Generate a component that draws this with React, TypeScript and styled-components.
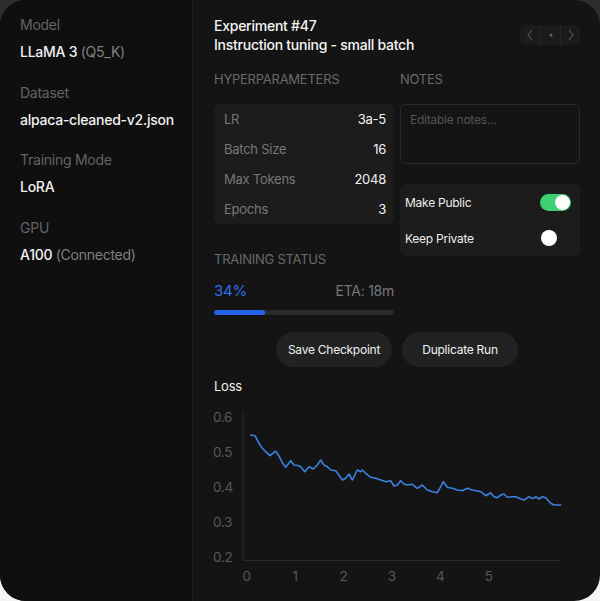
import React from "react";
import styled, { createGlobalStyle } from "styled-components";

const Global = createGlobalStyle`
  html, body { margin: 0; padding: 0; }
  body {
    width: 600px; height: 601px; overflow: hidden;
    background: linear-gradient(to bottom, #2e2e2e 0%, #2e2e2e 50%, #f4f4f4 50%, #f4f4f4 100%);
    font-family: Inter, "Noto Sans", sans-serif;
    letter-spacing: -0.25px;
    -webkit-font-smoothing: antialiased;
  }
  * { box-sizing: border-box; }
`;

const Shell = styled.div`
  width: 600px; height: 601px;
  border-radius: 26px;
  overflow: hidden;
  display: flex;
  background: #141414;
`;

const Sidebar = styled.aside`
  width: 193px; flex: none;
  background: #0f0f0f;
  border-right: 1px solid #1d1d1d;
  padding: 16px 20px;
  display: flex; flex-direction: column; gap: 22.5px;
`;

const Field = styled.div`
  display: flex; flex-direction: column; gap: 9px;
`;

const FieldLabel = styled.div`
  font-size: 14px; line-height: 18px; color: #636363;
`;

const FieldValue = styled.div`
  font-size: 14px; line-height: 18px; color: #f2f2f2; font-weight: 450;
  white-space: nowrap; letter-spacing: -0.25px;
`;

const Muted = styled.span`
  color: #808080; font-weight: 400;
`;

const Main = styled.main`
  flex: 1;
  padding: 16px 20px 0 21px;
  display: flex; flex-direction: column;
`;

const Header = styled.div`
  display: flex; justify-content: space-between; align-items: flex-start;
`;

const Title = styled.div`
  font-size: 14px; line-height: 19px; font-weight: 500; color: #f5f5f5;
`;

const Nav = styled.div`
  margin-top: 9px;
  display: flex; height: 20px;
  background: #1b1b1b; border-radius: 5px;
`;

const NavCell = styled.div<{ $divider?: boolean }>`
  width: 20px; height: 20px;
  display: flex; align-items: center; justify-content: center;
  border-left: ${(p) => (p.$divider ? "1px solid #242424" : "none")};
  color: #555;
`;

const Columns = styled.div`
  margin-top: 17px;
  display: grid; grid-template-columns: 180px 180px; column-gap: 6px;
`;

const Col = styled.div`
  display: flex; flex-direction: column;
`;

const SectionTitle = styled.div<{ $mt?: number }>`
  font-size: 13px; line-height: 16px; color: #6a6a6a;
  text-transform: uppercase;
  margin-top: ${(p) => p.$mt ?? 0}px;
  margin-bottom: 17px;
`;

const Card = styled.div`
  background: #1c1c1c; border-radius: 6px;
`;

const ParamRow = styled.div`
  height: 30px; padding: 0 8px 0 10px;
  display: flex; align-items: center; justify-content: space-between;
  font-size: 13px;
`;

const ParamLabel = styled.span`
  color: #777;
`;

const ParamValue = styled.span`
  color: #f2f2f2;
`;

const Notes = styled.div`
  height: 60px;
  border: 1px solid #2a2a2a; border-radius: 6px;
  padding: 7px 9px;
  font-size: 12px; line-height: 16px; color: #555;
`;

const ToggleCard = styled(Card)`
  margin-top: 20px;
`;

const ToggleRow = styled.div`
  height: 36px; padding: 0 5px;
  display: flex; align-items: center; justify-content: space-between;
  font-size: 12px; color: #eee;
`;

const Track = styled.div<{ $on: boolean }>`
  width: 31px; height: 17px; border-radius: 9px;
  background: ${(p) => (p.$on ? "#3fcf70" : "transparent")};
  display: flex; align-items: center;
  justify-content: ${(p) => (p.$on ? "flex-end" : "flex-start")};
  padding: 0 1px; margin-right: 4px;
`;

const Knob = styled.div<{ $on: boolean }>`
  width: ${(p) => (p.$on ? 15 : 16)}px; height: ${(p) => (p.$on ? 15 : 16)}px;
  border-radius: 50%; background: #fff;
`;

const StatusRow = styled.div`
  margin-top: -4px;
  display: flex; justify-content: space-between; align-items: center;
  height: 20px;
`;

const Percent = styled.span`
  font-size: 15px; color: #2f6fe8;
`;

const Eta = styled.span`
  font-size: 14px; color: #777;
`;

const Bar = styled.div`
  margin-top: 10px; height: 5px; border-radius: 3px; background: #2a2a2a; overflow: hidden;
`;

const Fill = styled.div`
  height: 100%; background: #2563eb; border-radius: 3px;
`;

const Actions = styled.div`
  margin-top: 17px;
  display: flex; justify-content: center; gap: 10px;
`;

const Button = styled.button`
  width: 116px; height: 35px; border-radius: 18px;
  border: none; background: #222; color: #f0f0f0;
  font-family: Inter, "Noto Sans", sans-serif; font-size: 12px; letter-spacing: -0.25px;
`;

const ChartTitle = styled.div`
  margin-top: 11px;
  font-size: 13px; line-height: 16px; color: #f2f2f2;
`;

const ChartSvg = styled.svg`
  display: block; margin-top: 6px; margin-left: -1px;
`;

const Chevron = ({ dir }: { dir: "l" | "r" }) => (
  <svg width="8" height="12" viewBox="0 0 8 12">
    <path
      d={dir === "l" ? "M6 1 L2 6 L6 11" : "M2 1 L6 6 L2 11"}
      fill="none" stroke="#555" strokeWidth="1.2"
    />
  </svg>
);

// points traced in a 3x zoom of region origin (195,370)
const raw: [number, number][] = [
  [170,195],[183,197],[195,220],[205,235],[215,245],[228,257],[240,247],[245,244],[255,258],[265,278],
  [275,292],[290,272],[300,285],[315,287],[320,290],[332,305],[345,290],[358,297],[370,285],[380,270],
  [390,285],[400,290],[410,300],[425,302],[435,315],[445,330],[455,325],[465,312],[475,330],[490,300],
  [500,305],[505,300],[515,310],[530,322],[545,325],[560,330],[575,335],[590,332],[600,348],[610,345],
  [620,332],[630,342],[640,345],[655,343],[670,355],[685,345],[700,360],[715,365],[730,368],[740,350],
  [748,335],[760,352],[775,355],[790,360],[805,362],[820,355],[835,360],[850,363],[860,365],[875,377],
  [890,368],[900,380],[910,383],[920,375],[930,372],[940,382],[955,380],[965,380],[975,385],[990,390],
  [1005,380],[1012,385],[1020,385],[1025,380],[1035,387],[1045,380],[1055,383],[1070,400],[1080,405],[1100,405],
];
// chart svg origin at page (214,400)
const pts = raw.map(([x, y]) => [x / 3 - 19, y / 3 - 30]);
const lossPath = pts.map((p, i) => `${i ? "L" : "M"}${p[0].toFixed(1)} ${p[1].toFixed(1)}`).join(" ");

const yTicks = ["0.6", "0.5", "0.4", "0.3", "0.2"];
const xTicks = ["0", "1", "2", "3", "4", "5"];

const LossChart = () => (
  <ChartSvg width="366" height="190" viewBox="0 0 366 190">
    <line x1="30" y1="13" x2="30" y2="160.5" stroke="#2a2a2a" strokeWidth="1" />
    <line x1="30" y1="160.5" x2="347" y2="160.5" stroke="#2a2a2a" strokeWidth="1" />
    {yTicks.map((t, i) => (
      <text key={t} x="0" y={16.7 + i * 35 + 5} textAnchor="start" fontSize="13.5" letterSpacing="-0.3" fill="#585858" fontFamily="Inter, sans-serif">
        {t}
      </text>
    ))}
    {xTicks.map((t, i) => (
      <text key={t} x={33.7 + i * 48.4} y="180.7" textAnchor="middle" fontSize="13.5" fill="#585858" fontFamily="Inter, sans-serif">
        {t}
      </text>
    ))}
    <path d={lossPath} fill="none" stroke="#3b82e0" strokeWidth="1.6" strokeLinejoin="round" strokeLinecap="round" />
  </ChartSvg>
);

const params = [
  ["LR", "3a-5"],
  ["Batch Size", "16"],
  ["Max Tokens", "2048"],
  ["Epochs", "3"],
];

export default function App() {
  const progress = 34;
  return (
    <>
      <Global />
      <Shell>
        <Sidebar>
          <Field>
            <FieldLabel>Model</FieldLabel>
            <FieldValue>LLaMA 3 <Muted>(Q5_K)</Muted></FieldValue>
          </Field>
          <Field>
            <FieldLabel>Dataset</FieldLabel>
            <FieldValue>alpaca-cleaned-v2.json</FieldValue>
          </Field>
          <Field>
            <FieldLabel>Training Mode</FieldLabel>
            <FieldValue>LoRA</FieldValue>
          </Field>
          <Field>
            <FieldLabel>GPU</FieldLabel>
            <FieldValue>A100 <Muted>(Connected)</Muted></FieldValue>
          </Field>
        </Sidebar>
        <Main>
          <Header>
            <Title>
              Experiment #47
              <br />
              Instruction tuning - small batch
            </Title>
            <Nav>
              <NavCell><Chevron dir="l" /></NavCell>
              <NavCell $divider>
                <svg width="4" height="4" viewBox="0 0 4 4"><circle cx="2" cy="2" r="1.5" fill="#666" /></svg>
              </NavCell>
              <NavCell $divider><Chevron dir="r" /></NavCell>
            </Nav>
          </Header>
          <Columns>
            <Col>
              <SectionTitle>Hyperparameters</SectionTitle>
              <Card>
                {params.map(([k, v]) => (
                  <ParamRow key={k}>
                    <ParamLabel>{k}</ParamLabel>
                    <ParamValue>{v}</ParamValue>
                  </ParamRow>
                ))}
              </Card>
              <SectionTitle $mt={27}>Training Status</SectionTitle>
              <StatusRow>
                <Percent>{progress}%</Percent>
                <Eta>ETA: 18m</Eta>
              </StatusRow>
              <Bar>
                <Fill style={{ width: `${(progress / 100) * 100 * 0.83}%` }} />
              </Bar>
            </Col>
            <Col>
              <SectionTitle>Notes</SectionTitle>
              <Notes>Editable notes...</Notes>
              <ToggleCard>
                <ToggleRow>
                  Make Public
                  <Track $on><Knob $on /></Track>
                </ToggleRow>
                <ToggleRow>
                  Keep Private
                  <Track $on={false}><Knob $on={false} /></Track>
                </ToggleRow>
              </ToggleCard>
            </Col>
          </Columns>
          <Actions>
            <Button>Save Checkpoint</Button>
            <Button>Duplicate Run</Button>
          </Actions>
          <ChartTitle>Loss</ChartTitle>
          <LossChart />
        </Main>
      </Shell>
    </>
  );
}
